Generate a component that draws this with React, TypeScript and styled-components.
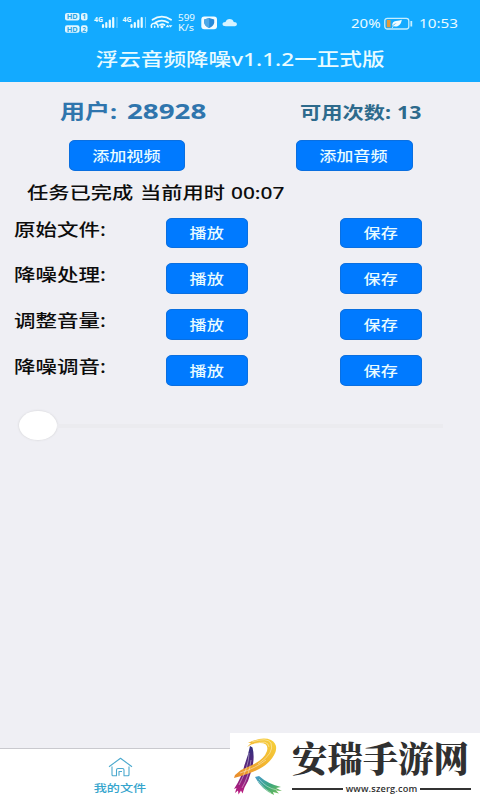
import React from 'react';
import styled, { createGlobalStyle } from 'styled-components';

const GlobalStyle = createGlobalStyle`
  * { box-sizing: border-box; }
  body { margin: 0; background: #efeff4; }
`;

const Page = styled.div`
  position: relative;
  display: flex;
  flex-direction: column;
  width: 480px;
  height: 800px;
  overflow: hidden;
  background: #efeff4;
  color: #0c0c0c;
  font-family: 'Noto Sans', 'Noto Sans CJK SC', sans-serif;
`;

const Header = styled.header`
  height: 82px;
  background: #13aaff;
  color: #e9fbff;
`;

const StatusBar = styled.div`
  display: flex;
  justify-content: space-between;
  height: 40px;
  padding: 0 22px 0 64px;
`;

const StatusIcons = styled.svg`
  display: block;
  flex: none;
`;

const StatusRight = styled.div`
  display: grid;
  grid-template-columns: 33px 35px 39px;
  align-items: center;
  padding-top: 7px;
`;

/* Type with widened letterforms; the slot around it sets its place. */
const Wide = styled.span<{ $size: number; $x?: number; $weight?: number; $center?: boolean }>`
  display: block;
  white-space: nowrap;
  font-size: ${(p) => p.$size}px;
  font-weight: ${(p) => p.$weight ?? 500};
  line-height: 1.4;
  transform: scaleX(${(p) => p.$x ?? 1.25});
  transform-origin: ${(p) => (p.$center ? 'center' : 'left')} center;
`;

const Title = styled.h1`
  display: flex;
  justify-content: center;
  margin: 0;
  padding-top: 7px;
`;

const Summary = styled.div`
  display: grid;
  grid-template-columns: 66.5px 173.5px 100px 1fr;
  align-items: center;
  height: 44px;
  margin-top: 7px;
  padding: 2px 0 0 60px;
  color: #2f75ad;
`;

const Remaining = styled.div`
  display: grid;
  grid-template-columns: 97px 1fr;
  grid-column: 3 / 5;
  padding-top: 2px;
  color: #2d6a8c;
`;

const AddRow = styled.div`
  display: flex;
  gap: 111px;
  padding: 7px 0 0 68.5px;
`;

const Button = styled.button<{ $w: number }>`
  display: flex;
  align-items: center;
  justify-content: center;
  width: ${(p) => p.$w}px;
  height: 30.5px;
  padding: 0 1px 0 0;
  border: 1px solid #0a6fe0;
  border-radius: 6px / 5px;
  background: #007aff;
  color: #e8fbff;
  font-family: inherit;
`;

const Status = styled.div`
  display: grid;
  grid-template-columns: 113px 91px 1fr;
  align-items: center;
  height: 44px;
  padding-left: 27px;
`;

const TaskRow = styled.div`
  display: grid;
  grid-template-columns: 152.5px 174px 1fr;
  height: 45.9px;
  padding: 3px 0 0 13.5px;
`;

const Slider = styled.div`
  display: flex;
  align-items: center;
  height: 30px;
  margin: 12.5px 37px 0 18.5px;
`;

const Knob = styled.div`
  width: 38px;
  height: 29.5px;
  border-radius: 50%;
  background: #fff;
  box-shadow: 0 0 2px 0.5px #d9d9dc;
`;

const Track = styled.div`
  flex: 1;
  height: 4px;
  background: #ebebef;
`;

const TabBar = styled.nav`
  display: flex;
  flex-direction: column;
  align-items: center;
  gap: 3.5px;
  height: 52px;
  margin-top: auto;
  padding: 8px 240px 0 0;
  border-top: 1px solid #c9c9ce;
  background: #fff;
  color: #36a5cd;
`;

const Watermark = styled.aside`
  position: absolute;
  right: 0;
  bottom: 0;
  display: flex;
  width: 250px;
  height: 67px;
  background: #fff;
  color: #303030;
`;

const BrandText = styled.div`
  padding: 1px 0 0 2px;
`;

const BrandName = styled.div`
  height: 46px;
  font: 900 35.4px/46px 'Noto Serif CJK SC', 'Noto Sans CJK SC', serif;
  white-space: nowrap;
`;

const BrandUrl = styled.div`
  display: flex;
  align-items: center;
  justify-content: space-between;
  width: 179px;
  height: 17px;
  font: 600 9.2px/17px 'Open Sans', sans-serif;
  letter-spacing: 0.15px;
`;

const Rule = styled.span<{ $w: number }>`
  width: ${(p) => p.$w}px;
  height: 2px;
  background: #333;
`;

function HdBadge({ y, n }: { y: number; n: string }) {
  return (
    <g transform={`translate(1 ${y})`}>
      <rect width="14.5" height="7.5" rx="2" fill="#dff6ff" />
      <text x="7.2" y="6.3" fontSize="6.8" fontWeight="700" textAnchor="middle" textLength="11" lengthAdjust="spacingAndGlyphs" fill="#28a5e8">HD</text>
      <rect x="16" width="6.5" height="7.5" rx="2" fill="#dff6ff" />
      <text x="19.2" y="6.3" fontSize="6.5" fontWeight="700" textAnchor="middle" fill="#28a5e8">{n}</text>
    </g>
  );
}

function Signal({ x }: { x: number }) {
  return (
    <g transform={`translate(${x} 0)`}>
      <text x="0" y="21.5" fontSize="6.4" fontWeight="700" textLength="9" lengthAdjust="spacingAndGlyphs">4G</text>
      <path d="M9 25.2v1.8M12.3 23v4M15.8 20.5v6.5M19.2 18v9" stroke="currentColor" strokeWidth="2.2" strokeLinecap="round" />
      <path d="M23 17v11" stroke="#7fd0fb" strokeWidth="1" />
    </g>
  );
}

function NetworkIcons() {
  return (
    <StatusIcons width="180" height="40" viewBox="0 0 180 40" fill="currentColor">
      <HdBadge y={13} n="1" />
      <HdBadge y={25.3} n="2" />
      <Signal x={30} />
      <Signal x={58.5} />
      <g fill="none" stroke="currentColor" strokeWidth="1.8" strokeLinecap="round">
        <path d="M88.5 19.7q9.3-6 18.6 0M91.5 22.5q6.3-3.8 12.6 0M96 25q2.5-1.6 4.5 0" />
        <path d="M87.5 27.2q-1-3.7 3-3.9 4 .2 3.5 3.9M90.7 26.3v1" strokeWidth="1.6" />
      </g>
      <circle cx="98" cy="26.7" r="1.5" />
      <path d="M101.5 27.2l2-2.4 2 2.4zM104.5 25.2h4l-2 2.2z" />
      <text x="114" y="21" fontSize="8.5" textLength="17" lengthAdjust="spacingAndGlyphs">599</text>
      <text x="114" y="30.5" fontSize="8.5" textLength="16" lengthAdjust="spacingAndGlyphs">K/s</text>
      <rect x="137.3" y="16.5" width="15.7" height="12.8" rx="3" fill="#f1fbff" />
      <path d="M145.2 18l5 1.5v3.2q-.5 3.4-5 5.2-4.5-1.8-5-5.2v-3.2z" fill="#278ad9" />
      <path d="M145.2 18v9.9q-4.5-1.8-5-5.2v-3.2z" fill="#4ba8e8" />
      <path d="M162 26.3q-3.5 0-3.5-2.2 0-2.2 3-2.2 1-3 4-3 3.5 0 4.2 3 3.2 0 3.2 2.3 0 2.1-3.4 2.1z" fill="#d7f3ff" />
    </StatusIcons>
  );
}

function BatteryIcon() {
  return (
    <svg width="31" height="14" viewBox="0 0 31 14">
      <rect x="0.8" y="1.3" width="24" height="10.7" rx="2.5" fill="none" stroke="#c6eeff" strokeWidth="1.3" />
      <rect x="2.8" y="3" width="3.7" height="7.3" fill="#e39a3c" />
      <path d="M7.8 10.6q1.5-3 5-4.5-3 .5-4.5 2.8Q7.8 4.5 12 4q4-.3 5.8-1.2-.7 4.7-3.8 6.2-2.4 1-4.2 0L8.5 11z" fill="#effbff" />
      <path d="M27.3 4v5.5" stroke="#c6eeff" strokeWidth="1.8" />
    </svg>
  );
}

function HomeIcon() {
  return (
    <svg width="25" height="20" viewBox="0 0 25 20" fill="none" stroke="#4ba9ce" strokeWidth="1.1" strokeLinejoin="round">
      <path d="M1 9.8L12.5 1.2 24 9.8M4 9.5v8.2q0 1 1 1h3.5V13q0-1.5 1.5-1.5h4.5q1.5 0 1.5 1.5v5.7H20q1 0 1-1V9.5M11 18.7v-4.2h3" />
    </svg>
  );
}

function BrandMark() {
  return (
    <svg width="60" height="67" viewBox="0 0 60 67" fill="none">
      <defs>
        <linearGradient id="stem" x1="0" y1="0" x2="0" y2="1">
          <stop offset="0" stopColor="#2f2f7e" />
          <stop offset=".5" stopColor="#66247a" />
          <stop offset="1" stopColor="#c01c80" />
        </linearGradient>
        <linearGradient id="bowl" x1="0" y1="1" x2="1" y2="0">
          <stop offset="0" stopColor="#e8892c" />
          <stop offset=".5" stopColor="#f2b32f" />
          <stop offset="1" stopColor="#f6d23c" />
        </linearGradient>
        <linearGradient id="leg" x1="0" y1="0" x2="1" y2="1">
          <stop offset="0" stopColor="#4b9bd0" />
          <stop offset=".5" stopColor="#3aa680" />
          <stop offset="1" stopColor="#7cc04b" />
        </linearGradient>
      </defs>
      <path d="M20 13l2.5 1.5q3 12-2 26-2 8-6 14l-2 6-1.500-3-2.500 4-.5-4-3 2.500 1.500-5-2.500 1Q12 44 14.500 32 18 23 20 13z" fill="url(#stem)" />
      <path d="M18 10Q32 3 41 7q7 4 4.500 12Q40 33 20 40 12 43 4 45l1-3 6-5 9-4q14-6 17-15 2-8-7-8-7 0-13 4l4-4z" fill="url(#bowl)" />
      <path d="M25 44l4-1q9 8 22 11l-5 1 6 3-6-.5 3 3-6-1.500 1 3Q31 56 25 44z" fill="url(#leg)" />
      <path d="M22 9Q37 4 41 10 45 20 28 31M24 11Q38 6 39 14M36 27Q26 35 10 40M19 20Q19 33 9 52M21 27Q19 43 12 55M29 46Q36 55 47 57M28 48Q34 56 41 60" stroke="#fff" strokeWidth=".6" opacity=".7" />
    </svg>
  );
}

const tasks = ['原始文件:', '降噪处理:', '调整音量:', '降噪调音:'];

export default function App() {
  return (
    <>
      <GlobalStyle />
      <Page>
        <Header>
          <StatusBar>
            <NetworkIcons />
            <StatusRight>
              <Wide $size={12.7} $x={1.18} $weight={400}>20%</Wide>
              <BatteryIcon />
              <Wide $size={12.7} $x={1.2} $weight={400}>10:53</Wide>
            </StatusRight>
          </StatusBar>
          <Title>
            <Wide $size={18} $x={1.255} $center>浮云音频降噪v1.1.2一正式版</Wide>
          </Title>
        </Header>
        <Summary>
          <Wide $size={20} $weight={700}>用户:</Wide>
          <Wide $size={21} $x={1.32} $weight={700}>28928</Wide>
          <Remaining>
            <Wide $size={17} $weight={700}>可用次数:</Wide>
            <Wide $size={17} $weight={700}>13</Wide>
          </Remaining>
        </Summary>
        <AddRow>
          <Button $w={116.5}><Wide $size={13.7} $center>添加视频</Wide></Button>
          <Button $w={116.5}><Wide $size={13.7} $center>添加音频</Wide></Button>
        </AddRow>
        <Status>
          <Wide $size={17}>任务已完成</Wide>
          <Wide $size={17}>当前用时</Wide>
          <Wide $size={16.7}>00:07</Wide>
        </Status>
        {tasks.map((label) => (
          <TaskRow key={label}>
            <Wide $size={17.2}>{label}</Wide>
            <Button $w={81.5}><Wide $size={13.7} $center>播放</Wide></Button>
            <Button $w={81.5}><Wide $size={13.7} $center>保存</Wide></Button>
          </TaskRow>
        ))}
        <Slider>
          <Knob />
          <Track />
        </Slider>
        <TabBar>
          <HomeIcon />
          <Wide $size={10.5} $center>我的文件</Wide>
        </TabBar>
        <Watermark>
          <BrandMark />
          <BrandText>
            <BrandName>安瑞手游网</BrandName>
            <BrandUrl>
              <Rule $w={51} />
              www.szerg.com
              <Rule $w={51} />
            </BrandUrl>
          </BrandText>
        </Watermark>
      </Page>
    </>
  );
}
